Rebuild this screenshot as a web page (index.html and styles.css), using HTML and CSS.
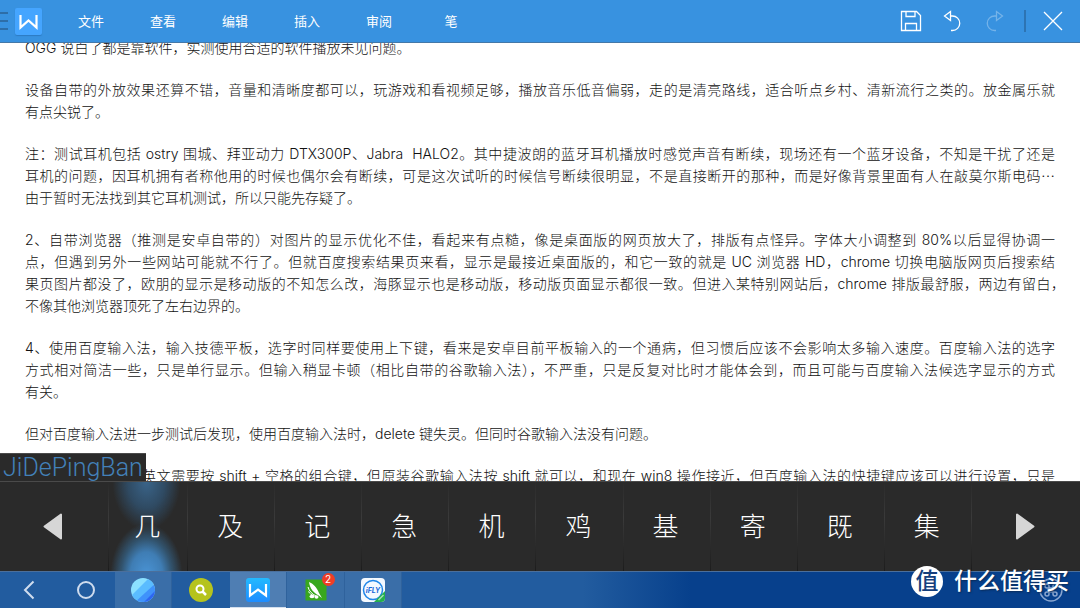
FILE: index.html
```html
<!DOCTYPE html>
<html lang="zh-CN">
<head>
<meta charset="utf-8">
<title>文档</title>
<link rel="stylesheet" href="styles.css">
</head>
<body>
<header class="toolbar">
  <button class="drawer" aria-label="抽屉"><i></i><i></i><i></i></button>
  <button class="app-logo" aria-label="WPS"><svg width="27" height="27" viewBox="0 0 27 27"><path d="M5.500 7v12.500l8-7 8 7V7" fill="none" stroke="#fff" stroke-width="2.200"/></svg></button>
  <nav class="menu">
    <button>文件</button><button>查看</button><button>编辑</button><button>插入</button><button>审阅</button><button>笔</button>
  </nav>
  <div class="tools">
    <button aria-label="保存"><svg width="22" height="22" viewBox="0 0 22 22"><path d="M1.500 1.500h15l4 4v15h-19zM6 1.500v5h9v-5M5.500 20.500v-7h11v7" /></svg></button>
    <button aria-label="撤销"><svg width="22" height="22" viewBox="0 0 22 22"><path d="M8.500 1.500v9L2.500 6zM8.500 6h2a7.200 7.200 0 0 1 0 14.500H9"/></svg></button>
    <button aria-label="重做" class="off" disabled><svg width="22" height="22" viewBox="0 0 22 22"><path d="M12.500 1.500v9l6-4.500zM12.500 6h-2a7.200 7.200 0 0 0 0 14.500H12"/></svg></button>
    <span class="sep"></span>
    <button aria-label="关闭"><svg width="22" height="22" viewBox="0 0 22 22"><path d="M2 2l18 18M20 2L2 20"/></svg></button>
  </div>
</header>

<main class="doc">
  <article class="page">
    <p><span class="end">OGG 说白了都是靠软件，实测使用合适的软件播放未见问题。</span></p>
    <p><span>设备自带的外放效果还算不错，音量和清晰度都可以，玩游戏和看视频足够，播放音乐低音偏弱，走的是清亮路线，适合听点乡村、清新流行之类的。放金属乐就</span><span class="end">有点尖锐了。</span></p>
    <p><span>注：测试耳机包括 ostry 围城、拜亚动力 DTX300P、Jabra&nbsp; HALO2。其中捷波朗的蓝牙耳机播放时感觉声音有断续，现场还有一个蓝牙设备，不知是干扰了还是</span><span>耳机的问题，因耳机拥有者称他用的时候也偶尔会有断续，可是这次试听的时候信号断续很明显，不是直接断开的那种，而是好像背景里面有人在敲莫尔斯电码⋯</span><span class="end">由于暂时无法找到其它耳机测试，所以只能先存疑了。</span></p>
    <p><span>2、自带浏览器（推测是安卓自带的）对图片的显示优化不佳，看起来有点糙，像是桌面版的网页放大了，排版有点怪异。字体大小调整到 80%以后显得协调一</span><span>点，但遇到另外一些网站可能就不行了。但就百度搜索结果页来看，显示是最接近桌面版的，和它一致的就是 UC 浏览器 HD，chrome 切换电脑版网页后搜索结</span><span class="hang">果页图片都没了，欧朋的显示是移动版的不知怎么改，海豚显示也是移动版，移动版页面显示都很一致。但进入某特别网站后，chrome 排版最舒服，两边有留白，</span><span class="end">不像其他浏览器顶死了左右边界的。</span></p>
    <p><span>4、使用百度输入法，输入技德平板，选字时同样要使用上下键，看来是安卓目前平板输入的一个通病，但习惯后应该不会影响太多输入速度。百度输入法的选字</span><span>方式相对简洁一些，只是单行显示。但输入稍显卡顿（相比自带的谷歌输入法），不严重，只是反复对比时才能体会到，而且可能与百度输入法候选字显示的方式</span><span class="end">有关。</span></p>
    <p><span class="end">但对百度输入法进一步测试后发现，使用百度输入法时，delete 键失灵。但同时谷歌输入法没有问题。</span></p>
    <p><span class="after-box">英文需要按 shift + 空格的组合键，但原装谷歌输入法按 shift 就可以，和现在 win8 操作接近，但百度输入法的快捷键应该可以进行设置，只是</span></p>
  </article>
  <div class="pinyin">JiDePingBan</div>
</main>

<section class="candidates" aria-label="候选字">
  <button aria-label="上一页"><svg width="20" height="27" viewBox="0 0 20 27"><path d="M18 1.500v24L1.500 13.500z" fill="#d6d6d6" stroke="#d6d6d6" stroke-width="2" stroke-linejoin="round"/></svg></button>
  <button class="picked">几</button><button>及</button><button>记</button><button>急</button><button>机</button><button>鸡</button><button>基</button><button>寄</button><button>既</button><button>集</button>
  <button aria-label="下一页"><svg width="20" height="27" viewBox="0 0 20 27"><path d="M2 1.500v24l16.500-12z" fill="#d6d6d6" stroke="#d6d6d6" stroke-width="2" stroke-linejoin="round"/></svg></button>
</section>

<footer class="taskbar">
  <button aria-label="返回"><svg width="24" height="24" viewBox="0 0 24 24"><path d="M17.500 3.500L9 12l8.500 8.500" fill="none" stroke="#cfdcee" stroke-width="2"/></svg></button>
  <button aria-label="主页"><svg width="24" height="24" viewBox="0 0 24 24"><circle cx="12" cy="12" r="8" fill="none" stroke="#cfdcee" stroke-width="2"/></svg></button>
  <button class="open" aria-label="浏览器"><svg width="24" height="24" viewBox="0 0 24 24"><defs><clipPath id="ball"><circle cx="12" cy="12" r="12"/></clipPath></defs><g clip-path="url(#ball)"><path fill="#8be0ff" d="M0 0h24v24H0z"/><path fill="#5abcff" d="M22-4v28H-6z"/><path fill="#3f92fb" d="M26 4v22H2z"/><path fill="#2e66f2" d="M28 9v19H9z"/></g></svg></button>
  <button aria-label="搜索"><svg width="24" height="24" viewBox="0 0 24 24"><circle cx="12" cy="12" r="12" fill="#b5c31d"/><circle cx="11" cy="11" r="3.500" fill="none" stroke="#fff" stroke-width="2"/><path d="M13.500 13.500L17 17" stroke="#fff" stroke-width="2.500"/></svg></button>
  <button class="open current" aria-label="WPS"><svg width="24" height="24" viewBox="0 0 24 24"><defs><linearGradient id="w" x2="0" y2="1"><stop stop-color="#23baff"/><stop offset="1" stop-color="#1d8cff"/></linearGradient></defs><rect width="24" height="24" rx="3" fill="url(#w)"/><path d="M4 6v11.500l8-6 8 6V6" fill="none" stroke="#fff" stroke-width="2.200"/></svg></button>
  <button class="open" aria-label="应用"><span class="badged"><svg width="24" height="24" viewBox="0 0 24 24"><path fill="#38a71d" d="M1.500 1.500h21v21h-21z"/><path fill="#fff" d="M5 4c4 1.500 8 5.500 10 11l3 5-4-3c-4-2-8-6-9-13z"/><path fill="none" stroke="#fff" d="M4 9c1 4 4 7 8 9M4.500 13.500c1 2 3 3.500 5 4"/><ellipse cx="8" cy="18.500" rx="2.500" ry="1.800" fill="#fff"/><ellipse cx="12.500" cy="19" rx="2" ry="1.800" fill="#fff"/></svg><b>2</b></span></button>
  <button class="open" aria-label="讯飞"><svg width="24" height="24" viewBox="0 0 24 24"><rect width="24" height="24" rx="4" fill="#f4f9ff"/><circle cx="12" cy="12" r="9.500" fill="none" stroke="#1f86e8" stroke-width="1.500"/><text x="12" y="15" text-anchor="middle" class="ifly">iFLY</text><path fill="#25b04b" d="M24 13v7q0 4-4 4h-7z"/><path stroke="#a6e2b5" stroke-width="1.500" d="M17.500 22l5-5"/></svg></button>
  <button class="ime" aria-label="输入法"><svg width="24" height="24" viewBox="0 0 24 24"><circle cx="12" cy="12" r="11" fill="none" stroke="#8aa6d0" stroke-width="1.500"/><path d="M10 10v4M14 10v4M10 10h4M10 14h4M10 10H8a2 2 0 1 1 2-2zM14 10V8a2 2 0 1 1 2 2zM10 14v2a2 2 0 1 1-2-2zM14 14h2a2 2 0 1 1-2 2z" fill="none" stroke="#8aa6d0" stroke-width="1.500"/></svg></button>
</footer>
<div class="watermark"><span>值</span>什么值得买</div>
</body>
</html>
```

FILE: styles.css
```css
* { box-sizing: border-box; }
body {
  margin: 0;
  height: 100vh;
  display: flex;
  flex-direction: column;
  overflow: hidden;
  position: relative;
  background: #fff;
  font-family: Inter, "Noto Sans CJK SC", sans-serif;
  font-weight: 300;
}
button {
  border: 0;
  padding: 0;
  background: none;
  color: inherit;
  font: inherit;
  display: flex;
  align-items: center;
  justify-content: center;
}
.toolbar {
  flex: none;
  height: 43px;
  display: flex;
  align-items: center;
  background: #3892e0;
  border-bottom: 1px solid #4478a8;
  color: #fff;
  font-size: 13px;
}
.drawer {
  width: 8px;
  flex-direction: column;
  align-items: stretch;
  gap: 6px;
}
.drawer i { height: 2px; background: #2d6ea8; }
.app-logo {
  width: 27px;
  height: 27px;
  margin-left: 7px;
  border-radius: 2px;
  background: #45a5ff;
  box-shadow: 0 1px 1px #2d7cc4;
}
.menu { display: flex; margin-left: 13px; font-weight: 400; }
.menu button { width: 72px; height: 42px; padding-bottom: 2px; }
.tools { display: flex; align-items: center; margin-left: auto; padding-right: 6px; }
.tools button { width: 42px; height: 42px; }
.tools path { fill: none; stroke: #fff; stroke-width: 1.3; }
.tools .off { opacity: .3; }
.sep { width: 2px; height: 22px; margin: 0 6px 0 8px; background: #2d74b3; }

.doc {
  flex: 1;
  min-height: 0;
  position: relative;
  overflow: hidden;
}
.page {
  display: flex;
  flex-direction: column;
  gap: 20px;
  margin-top: -6px;
  padding: 0 25px;
  color: #111;
  font-size: 14px;
  line-height: 22px;
}
.page p { margin: 0; }
.page span {
  display: block;
  white-space: nowrap;
  text-align: justify;
  text-align-last: justify;
}
.page .end { text-align-last: left; }
.page .hang { margin-right: -10px; }
.page .after-box { padding-left: 117px; }
.pinyin {
  position: absolute;
  left: 0;
  bottom: 0;
  padding: 0 3px;
  background: #2a2a2a;
  border-top: 1px solid #4a4a4a;
  color: #4381b9;
  font-family: Roboto, sans-serif;
  font-size: 25px;
  line-height: 27px;
}

.candidates {
  flex: none;
  height: 90px;
  display: grid;
  grid-template-columns: 108fr 79fr repeat(9, 87fr) 109fr;
  background: #2a2a2a;
  border-top: 1px solid #4a4a4a;
  color: #fff;
  font-size: 26px;
}
.candidates button { padding: 0 2px 4px 0; }
.candidates button:first-child,
.candidates button:last-child { padding-bottom: 0; }
.candidates button + button {
  border-left: 1px solid;
  border-image: linear-gradient(#2a2a2a, #3a3a3a 40%, #1c1c1c) 1;
}
.candidates .picked {
  background:
    radial-gradient(ellipse 36px 52px at 48% 105%, #4a94d6, #3f7db4 45%, #32546f 70%, transparent),
    radial-gradient(ellipse 34px 48px at 48% 0, #3a6489, #2f4a62 55%, transparent);
}

.taskbar {
  flex: none;
  height: 37px;
  display: flex;
  background: linear-gradient(90deg, #225c9f 54%, #07408c 64%);
  border-top: 1px solid #4b6f9b;
}
.taskbar button { width: 57px; border-right: 1px solid transparent; flex: none; }
.taskbar button:nth-child(even) { width: 58px; }
.taskbar .open { background: #3a6ea8; border-right-color: #2f629c; }
.taskbar .current { background: #4f7eb3; box-shadow: inset 0 -1px #d5e0ee; }
.taskbar .ime { margin-left: auto; }
.badged { position: relative; display: flex; }
.badged b {
  position: absolute;
  right: -7px;
  top: -5px;
  width: 13px;
  border-radius: 7px;
  background: #ef3e26;
  color: #fff;
  font-size: 10px;
  line-height: 13px;
  font-weight: 400;
}
.ifly { font: italic 700 7px Inter, sans-serif; fill: #1667d8; }
.watermark {
  position: absolute;
  right: 11px;
  bottom: 11px;
  display: flex;
  align-items: center;
  gap: 11px;
  color: #fff;
  font-size: 23px;
  line-height: 31px;
  font-weight: 500;
  text-shadow: 1px 1px 2px #0a2a55;
}
.watermark span {
  width: 32px;
  border-radius: 50%;
  background: #fff;
  color: #143f7d;
  text-align: center;
  text-shadow: none;
}
```
